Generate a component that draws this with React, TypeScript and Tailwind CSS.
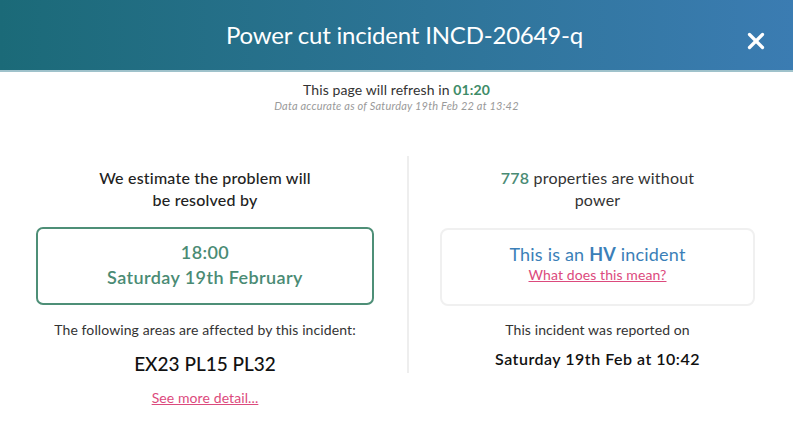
import { X } from "lucide-react";

const font = { fontFamily: "Lato, 'Open Sans', sans-serif" };

export default function App() {
  return (
    <div className="w-[793px] h-[447px] bg-white overflow-hidden" style={font}>
      {/* Header */}
      <div className="relative h-[72px] bg-linear-to-r from-[#1b6a78] to-[#3b7cb2] border-b-2 border-[#9fc2cb] flex items-center justify-center">
        <h1 className="pl-[16px] text-white text-[24px] leading-none tracking-[-0.2px]">
          Power cut incident INCD-20649-q
        </h1>
        <button className="absolute right-[24px] top-[28px] text-white">
          <X size={26} strokeWidth={3} />
        </button>
      </div>

      {/* Refresh info */}
      <div className="pt-[9px] text-center">
        <p className="text-[14px] leading-[18px] tracking-[0.1px] text-[#333]">
          This page will refresh in{" "}
          <span className="font-bold text-[#3e8c68]">01:20</span>
        </p>
        <p className="text-[11px] leading-[14px] tracking-[0.2px] italic text-[#9a9a9a]">
          Data accurate as of Saturday 19th Feb 22 at 13:42
        </p>
      </div>

      {/* Columns */}
      <div className="flex items-start pl-[36px] pr-[38px] mt-[43px]">
        <div className="w-[371px] pr-[33px] pt-[11px] flex flex-col items-center text-center">
          <p className="text-[16px] leading-[22px] tracking-[0.2px] font-medium text-[#222]">
            We estimate the problem will
            <br />
            be resolved by
          </p>
          <div className="mt-[16px] w-full h-[78px] border-2 border-[#4e8f77] rounded-[7px] pt-[11px] flex flex-col items-center text-[#4a8b74] font-semibold text-[18px] leading-[25px] tracking-[0.4px]">
            <span>18:00</span>
            <span>Saturday 19th February</span>
          </div>
          <p className="mt-[16px] text-[14px] leading-[18px] tracking-[0.1px] text-[#333]">
            The following areas are affected by this incident:
          </p>
          <p className="mt-[12px] text-[19px] leading-[26px] font-medium text-[#111]">
            EX23 PL15 PL32
          </p>
          <a href="#" className="mt-[12px] text-[14px] leading-[18px] tracking-[0.1px] text-[#dc4a7d] underline">
            See more detail...
          </a>
        </div>

        <div className="w-[348px] border-l-2 border-[#eeeeee] pl-[31px] pt-[11px] pb-[3px] flex flex-col items-center text-center">
          <p className="text-[16px] leading-[22px] tracking-[0.2px] text-[#333]">
            <span className="font-semibold text-[#4a8b74]">778</span> properties are without
            <br />
            power
          </p>
          <div className="mt-[17px] w-full h-[78px] border-2 border-[#f0f0f0] rounded-[8px] pt-[12px] flex flex-col items-center">
            <span className="text-[18px] leading-[24px] tracking-[0.2px] text-[#3b7fb8]">
              This is an <span className="font-bold">HV</span> incident
            </span>
            <a href="#" className="text-[14px] leading-[18px] tracking-[0.1px] text-[#dc4a7d] underline">
              What does this mean?
            </a>
          </div>
          <p className="mt-[15px] text-[14px] leading-[18px] tracking-[0.1px] text-[#333]">
            This incident was reported on
          </p>
          <p className="mt-[9px] text-[16px] leading-[22px] tracking-[0.5px] font-semibold text-[#111]">
            Saturday 19th Feb at 10:42
          </p>
        </div>
      </div>
    </div>
  );
}
